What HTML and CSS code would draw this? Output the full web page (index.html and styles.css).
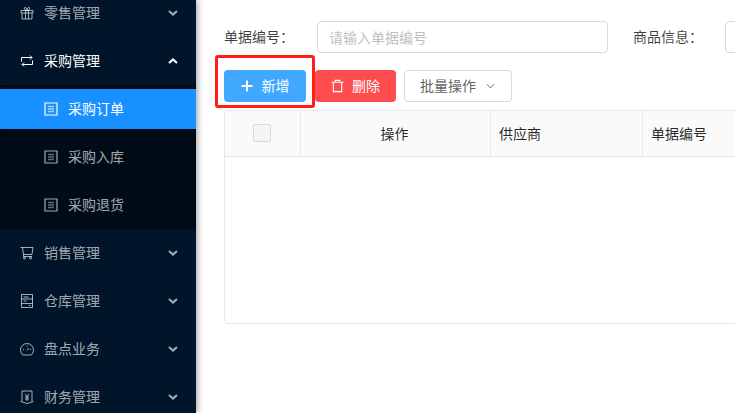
FILE: index.html
```html
<!DOCTYPE html>
<html lang="en">
<head>
    <meta charset="UTF-8">
    <meta name="viewport" content="width=device-width, initial-scale=1.0">
    <title>采购订单</title>
    <link rel="stylesheet" href="styles.css">
</head>
<body>

    <div class="layout">
        <div class="sidebar">
            <div class="menu">
                <div class="menu-title">
                    <svg class="menu-icon" viewBox="0 0 14 14"><path d="M1 4.500h12v2.500H1zM2 7v6h10V7M5.500 4.500v8.500M8.500 4.500v8.500M7 4.500C5 4.500 3.800 3.200 4.500 1.800S6.800 2 7 4.500C7.200 2 8.800.4 9.500 1.800S9 4.500 7 4.500z"/></svg>
                    <span>零售管理</span>
                    <svg class="arrow" viewBox="0 0 10 6"><path d="M1 1l4 3.600L9 1"/></svg>
                </div>
                <div class="menu-title open">
                    <svg class="menu-icon" viewBox="0 0 14 14"><path d="M1.500 7.500V3.500h10.500M10 1.500l2 2-2 2M12.500 6.500v4H2M4 8.500l-2 2 2 2"/></svg>
                    <span>采购管理</span>
                    <svg class="arrow" viewBox="0 0 10 6"><path d="M1 5l4-3.600L9 5"/></svg>
                </div>
                <div class="submenu">
                    <div class="submenu-item selected">
                        <svg class="menu-icon doc-icon" viewBox="0 0 14 14"><path d="M1 1h12v12H1z"/><path class="doc-lines" d="M4 4.500h6M4 7h6M4 9.500h6"/></svg>
                        <span>采购订单</span>
                    </div>
                    <div class="submenu-item">
                        <svg class="menu-icon doc-icon" viewBox="0 0 14 14"><path d="M1 1h12v12H1z"/><path class="doc-lines" d="M4 4.500h6M4 7h6M4 9.500h6"/></svg>
                        <span>采购入库</span>
                    </div>
                    <div class="submenu-item">
                        <svg class="menu-icon doc-icon" viewBox="0 0 14 14"><path d="M1 1h12v12H1z"/><path class="doc-lines" d="M4 4.500h6M4 7h6M4 9.500h6"/></svg>
                        <span>采购退货</span>
                    </div>
                </div>
                <div class="menu-title">
                    <svg class="menu-icon" viewBox="0 0 14 14"><path d="M.5 1.500h12.500l-1 7H3.500L2.500 1.500M3.500 8.500v2h8.500"/><circle cx="4.500" cy="12" r="1"/><circle cx="10.500" cy="12" r="1"/></svg>
                    <span>销售管理</span>
                    <svg class="arrow" viewBox="0 0 10 6"><path d="M1 1l4 3.600L9 1"/></svg>
                </div>
                <div class="menu-title">
                    <svg class="menu-icon" viewBox="0 0 14 14"><path d="M1.500.5h11v13h-11zM1.500 5h11M1.500 9.500h11M3.500 3h5M3.500 7h3M8.500 11.500h2"/></svg>
                    <span>仓库管理</span>
                    <svg class="arrow" viewBox="0 0 10 6"><path d="M1 1l4 3.600L9 1"/></svg>
                </div>
                <div class="menu-title">
                    <svg class="menu-icon" viewBox="0 0 14 14"><path d="M2.800 13a6.500 6.500 0 1 1 8.400 0zM7 8.500l2-2.500M3 7.500h1M10 7.500h1M7 3.500v1"/></svg>
                    <span>盘点业务</span>
                    <svg class="arrow" viewBox="0 0 10 6"><path d="M1 1l4 3.600L9 1"/></svg>
                </div>
                <div class="menu-title">
                    <svg class="menu-icon" viewBox="0 0 14 14"><path d="M2 1h10v10.500M2 1v10.500M.5 11.500L7 13.500l6.500-2M5 4l2 2.500L9 4M5 7h4M5 9h4M7 6.500V11"/></svg>
                    <span>财务管理</span>
                    <svg class="arrow" viewBox="0 0 10 6"><path d="M1 1l4 3.600L9 1"/></svg>
                </div>
            </div>
        </div>

        <div class="content">
            <div class="filter-row">
                <label class="filter-label">单据编号：</label>
                <input class="filter-input" type="text" placeholder="请输入单据编号">
                <label class="filter-label goods-label">商品信息：</label>
                <input class="filter-input" type="text">
            </div>

            <div class="toolbar">
                <button class="btn btn-add">
                    <svg class="btn-icon" viewBox="0 0 12 12"><path d="M6 .5v11M.5 6h11"/></svg>
                    <span>新增</span>
                </button>
                <button class="btn btn-delete">
                    <svg class="btn-icon" viewBox="0 0 14 14"><path d="M.5 3h13M4.500 3V1h5v2M2.500 3v10h9V3"/></svg>
                    <span>删除</span>
                </button>
                <button class="btn btn-batch">
                    <span>批量操作</span>
                    <svg class="btn-arrow" viewBox="0 0 10 6"><path d="M1 1l4 4 4-4"/></svg>
                </button>
                <div class="highlight"></div>
            </div>

            <div class="table">
                <div class="table-head">
                    <div class="cell cell-check"><span class="checkbox"></span></div>
                    <div class="cell cell-center">操作</div>
                    <div class="cell">供应商</div>
                    <div class="cell">单据编号</div>
                </div>
            </div>
        </div>
    </div>

</body>
</html>
```

FILE: styles.css
```css
body {
    font-family: "Noto Sans CJK SC", "Noto Sans", sans-serif;
    font-size: 14px;
    background-color: #fff;
    margin: 0;
    padding: 0;
    overflow: hidden;
}

.layout {
    display: flex;
    height: 413px;
    overflow: hidden;
}

.sidebar {
    flex: 0 0 196px;
    background-color: #001529;
    box-shadow: 2px 0 6px rgba(0, 21, 41, 0.35);
    overflow: hidden;
}

.menu {
    display: flex;
    flex-direction: column;
    margin-top: -11px;
}

.menu-title {
    display: flex;
    flex-shrink: 0;
    align-items: center;
    height: 40px;
    margin: 4px 0;
    padding-left: 20px;
    color: rgba(255, 255, 255, 0.65);
}

.menu-title.open {
    color: #fff;
}

.menu-title span,
.submenu-item span {
    margin-left: 10px;
    padding-bottom: 2px;
}

.menu-icon {
    width: 14px;
    height: 14px;
    fill: none;
    stroke: currentColor;
    stroke-width: 1;
    flex-shrink: 0;
}

.arrow {
    width: 10px;
    height: 6px;
    margin-left: auto;
    margin-right: 18px;
    fill: none;
    stroke: currentColor;
    stroke-width: 2;
}

.doc-icon {
    stroke-width: 1.2;
}

.doc-lines {
    stroke-width: 1.6;
    opacity: 0.6;
}

.submenu {
    background-color: #000c17;
    padding: 4px 0;
    box-shadow: inset 0 2px 8px rgba(0, 0, 0, 0.45);
}

.submenu-item {
    display: flex;
    align-items: center;
    height: 40px;
    margin-bottom: 8px;
    padding-left: 44px;
    color: rgba(255, 255, 255, 0.65);
}

.submenu-item:last-child {
    margin-bottom: 0;
}

.submenu-item.selected {
    background-color: #1890ff;
    color: #fff;
}

.content {
    flex: 1;
    min-width: 0;
    padding: 21px 0 0 28px;
}

.filter-row {
    display: flex;
    align-items: center;
    width: 700px;
}

.filter-label {
    color: rgba(0, 0, 0, 0.75);
    white-space: nowrap;
    width: 93px;
    flex-shrink: 0;
    padding-bottom: 2px;
}

.goods-label {
    width: 92px;
    margin-left: 25px;
}

.filter-input {
    width: 291px;
    height: 32px;
    box-sizing: border-box;
    flex-shrink: 0;
    padding: 0 11px;
    font: inherit;
    border: 1px solid #d9d9d9;
    border-radius: 4px;
    outline: none;
}

.filter-input::placeholder {
    color: #bfbfbf;
}

.toolbar {
    position: relative;
    display: flex;
    gap: 8px;
    margin-top: 17px;
}

.btn {
    display: flex;
    align-items: center;
    justify-content: center;
    height: 32px;
    box-sizing: border-box;
    padding: 0;
    font: inherit;
    border: none;
    border-radius: 4px;
    color: #fff;
}

.btn span {
    padding-bottom: 2px;
}

.btn-add {
    width: 82px;
    margin-right: 1px;
    background-color: #40a9ff;
    gap: 9px;
}

.btn-delete {
    width: 81px;
    background-color: #ff4d4f;
    gap: 8px;
}

.btn-batch {
    width: 108px;
    padding-right: 1px;
    background-color: #fff;
    border: 1px solid #d9d9d9;
    color: rgba(0, 0, 0, 0.65);
    gap: 10px;
}

.btn-icon {
    width: 12px;
    height: 12px;
    fill: none;
    stroke: currentColor;
    stroke-width: 2;
}

.btn-delete .btn-icon {
    width: 13px;
    height: 14px;
    stroke-width: 1.2;
}

.btn-arrow {
    width: 9px;
    height: 6px;
    fill: none;
    stroke: currentColor;
    stroke-width: 1;
}

.highlight {
    position: absolute;
    left: -9px;
    top: -15px;
    width: 100px;
    height: 53px;
    box-sizing: border-box;
    border: 3px solid #ff1f14;
    border-radius: 3px;
}

.table {
    width: 700px;
    height: 214px;
    margin-top: 8px;
    box-sizing: border-box;
    border: 1px solid #e8e8e8;
    border-radius: 4px;
    overflow: hidden;
}

.table-head {
    display: grid;
    grid-template-columns: 76px 190px 152px 1fr;
    height: 46px;
    box-sizing: border-box;
    background-color: #fafafa;
    border-bottom: 1px solid #e8e8e8;
}

.cell {
    display: flex;
    align-items: center;
    padding-bottom: 2px;
    padding-left: 8px;
    color: rgba(0, 0, 0, 0.85);
    border-right: 1px solid #e8e8e8;
}

.cell-center,
.cell-check {
    justify-content: center;
    padding-left: 0;
    padding-right: 2px;
}

.checkbox {
    width: 16px;
    height: 16px;
    background-color: #f5f5f5;
    border: 1px solid #d9d9d9;
    border-radius: 2px;
}
```
